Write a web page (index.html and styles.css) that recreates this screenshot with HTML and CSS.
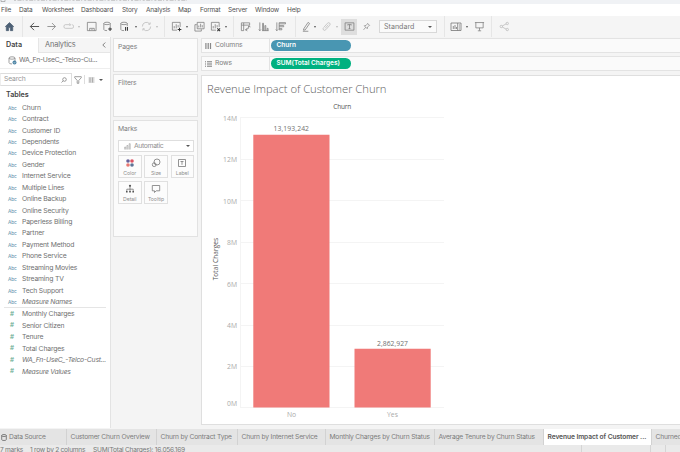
FILE: index.html
```html
<!DOCTYPE html>
<html lang="en">
<head>
<meta charset="utf-8">
<title>Revenue Impact of Customer Churn</title>
<link rel="stylesheet" href="styles.css">
</head>
<body>
<div class="app">
  <div class="titlebar"><svg width="200" height="4" viewBox="0 0 200 4"><path d="M1 0v1.500h4V0" fill="none" stroke="#999" stroke-width=".7"/><path d="M14 .4H187" stroke="#bbb" stroke-width=".8" stroke-dasharray="2 1.500 4 1.200 1 2"/></svg></div>
  <nav class="menu"><span>File</span><span>Data</span><span>Worksheet</span><span>Dashboard</span><span>Story</span><span>Analysis</span><span>Map</span><span>Format</span><span>Server</span><span>Window</span><span>Help</span></nav>
  <div class="toolbar">
    <svg class="ic" viewBox="0 0 12 12"><path d="M1.500 6 6 1.700 10.500 6H9.500V10.500H7V7.200H5V10.500H2.500V6Z" fill="#4d6075" stroke="#4d6075"/></svg>
    <i class="sep"></i>
    <svg class="ic dark" viewBox="0 0 12 12"><path d="M11 6H1.500M5.500 2 1.500 6l4 4"/></svg>
    <svg class="ic" viewBox="0 0 12 12"><path d="M1.500 6h8.700M6.500 2.200 10.300 6 6.500 9.800"/></svg>
    <svg class="ic pale" viewBox="0 0 12 12"><path d="M8 4H2.500Q1 4 1 6t1.500 2H10q1.500 0 1.500-2T10 4M7 2.500 8.500 4 7 5.500"/></svg>
    <i class="caret pale"></i>
    <svg class="ic" viewBox="0 0 12 12"><path d="M1.500 1.500h9.500v9h-9.500ZM4 10.500V8h5v2.500M6.500 8.500v1.500"/></svg>
    <svg class="ic" viewBox="0 0 12 12"><path d="M2 2.600v6.600Q2 10.500 5.500 10.500M9 2.600v4M2 2.600Q2 1.300 5.500 1.300T9 2.600 5.500 4 2 2.600"/><path class="strong" d="M6.800 8.800h4M8.800 6.800v4"/></svg>
    <svg class="ic" viewBox="0 0 12 12"><path d="M2 2.600v6.600Q2 10.500 5.500 10.500M9 2.600v3M2 2.600Q2 1.300 5.500 1.300T9 2.600 5.500 4 2 2.600"/><path class="strong" d="M7.200 6.500v4M9.200 6.500v4"/></svg>
    <i class="caret"></i>
    <svg class="ic pale" viewBox="0 0 12 12"><path d="M1.500 6A4.400 4.400 0 0 1 9.500 3.300M10.500 6A4.400 4.400 0 0 1 2.500 8.700M10 1.500v2H8M2 10.500v-2h2"/></svg>
    <i class="caret pale"></i>
    <i class="sep"></i>
    <svg class="ic" viewBox="0 0 12 12"><path d="M6.500 10H1.500V1.500h8.500v5M3.500 8V5.500M5.700 8V3.500M7.800 7V4.500"/><path class="strong" d="M7.300 9.300h4M9.300 7.300v4"/></svg>
    <i class="caret"></i>
    <svg class="ic" viewBox="0 0 12 12"><path d="M3.500 1.500h7.500v7H3.500ZM3 4H1v7h7V9M5.200 7V5M7.200 7V3M9 7V4.500"/></svg>
    <svg class="ic" viewBox="0 0 12 12"><path d="M6.500 10H1.500V1.500h8.500v5M3.500 8V5.500M5.700 8V3.500M7.800 7V4.500"/><path class="strong" d="m8 8 3 3M11 8l-3 3"/></svg>
    <i class="caret"></i>
    <i class="sep"></i>
    <svg class="ic" viewBox="0 0 12 12"><path d="M1.500 2h9v2.500h-9ZM1.500 4.500V10.500H4v-8.500M10 5.500Q10 9 6 9.500M8 8 6 9.600l2 1.200M8.700 6.800 10 5.200l1.300 1.600"/></svg>
    <svg class="ic" viewBox="0 0 12 12"><path d="M2 1.500v9M.8 9.300 2 10.600l1.200-1.300M5 10.500V2.500h1v8M7.500 10.500V5h1v5.500M10 10.500V8h1v2.500M4.500 10.500h7"/></svg>
    <svg class="ic" viewBox="0 0 12 12"><path d="M2 1.500v9M.8 9.300 2 10.600l1.200-1.300M4.500 1.800H11.500v1.300h-7M4.500 5H9.500v1.300h-5M4.500 8.300H7.500v1.300h-3M4.500 1.800v8"/></svg>
    <i class="sep"></i>
    <svg class="ic" viewBox="0 0 12 12"><path d="m3 8.500 4.700-7 1.700 1.200-4.800 7L2.700 10ZM2 11.200h6"/></svg>
    <i class="caret"></i>
    <svg class="ic pale" viewBox="0 0 12 12"><path d="m3 7 4-4.500Q8.500 1.200 9.500 2.300t0 2.400L5.300 9.500Q3.800 10.800 2.700 9.700t0-2.400M4.500 8l3.500-4"/></svg>
    <i class="caret pale"></i>
    <span class="toggled"><svg class="ic" viewBox="0 0 12 12"><path d="M1.200 2h9.600v8H1.200ZM4 4.700V4h4v.7M6 4v4.200M5 8.200h2"/></svg></span>
    <svg class="ic pin" viewBox="0 0 12 12"><path d="m7 1.500 3.500 3.500M7.500 2.200 5.500 4.500 3 5l4 4 .5-2.500 2.300-2M5 7 2 10.500"/></svg>
    <span class="select">Standard<i class="caret"></i></span>
    <i class="sep"></i>
    <svg class="ic wide" viewBox="0 0 12 12"><path d="M1 2h10v7.500H1ZM7.700 2v7.500M3.300 8V5M5 8V4M6.500 8V6M9 4h1M9 6h1M9 8h1"/></svg>
    <i class="caret"></i>
    <svg class="ic" viewBox="0 0 12 12"><path d="M1 1.700h10M2 1.700v5.800h8V1.700M6 7.500v3M4.200 10.700h3.600"/></svg>
    <i class="sep"></i>
    <svg class="ic pale" viewBox="0 0 12 12"><path d="M3.500 5.500 8 3M3.500 6.500 8 9"/><circle cx="2.500" cy="6" r="1.300"/><circle cx="9" cy="2.700" r="1.300"/><circle cx="9" cy="9.300" r="1.300"/></svg>
  </div>
  <main class="work">
    <aside class="data">
      <div class="tabs"><b>Data</b><span>Analytics<svg width="4" height="6" viewBox="0 0 4 6"><path d="M3.300.5.800 3l2.500 2.500" fill="none" stroke="#666" stroke-width=".8"/></svg></span></div>
      <div class="source"><svg width="9" height="9" viewBox="0 0 9 9" fill="none" stroke="#888" stroke-width=".8"><path d="M1 2v4.500Q1 8 4 8M7 2v3M1 2Q1 .8 4 .8T7 2 4 3.200 1 2"/><circle cx="6.500" cy="6.500" r="2" fill="#4a83a3" stroke="none"/><path d="m5.600 6.500.7.700 1.200-1.400" stroke="#fff" stroke-width=".5"/></svg><span>WA_Fn-UseC_-Telco-Cu...</span></div>
      <div class="searchrow">
        <div class="search">Search<svg width="6" height="6" viewBox="0 0 6 6" fill="none" stroke="#777" stroke-width=".7"><circle cx="3.500" cy="2.500" r="1.800"/><path d="M2.200 3.800.5 5.500"/></svg></div>
        <svg width="8" height="8" viewBox="0 0 8 8" fill="none" stroke="#888" stroke-width=".8"><path d="M.7.700h6.600v1L4.800 4.400v2.900H3.200V4.400L.7 1.700Z"/></svg>
        <i class="line"></i>
        <svg width="7" height="6" viewBox="0 0 7 6" fill="none" stroke="#999" stroke-width=".7"><path d="M.5 1h6M.5 3h6M.5 5h6M2 .5v5M4.500 .5v5"/></svg>
        <i class="caret"></i>
      </div>
      <h2>Tables</h2>
      <ul class="fields dims">
        <li>Churn</li><li>Contract</li><li>Customer ID</li><li>Dependents</li><li>Device Protection</li><li>Gender</li><li>Internet Service</li><li>Multiple Lines</li><li>Online Backup</li><li>Online Security</li><li>Paperless Billing</li><li>Partner</li><li>Payment Method</li><li>Phone Service</li><li>Streaming Movies</li><li>Streaming TV</li><li>Tech Support</li><li class="gen">Measure Names</li>
      </ul>
      <ul class="fields meas">
        <li>Monthly Charges</li><li>Senior Citizen</li><li>Tenure</li><li>Total Charges</li><li class="gen">WA_Fn-UseC_-Telco-Cust...</li><li class="gen">Measure Values</li>
      </ul>
    </aside>
    <section class="cards">
      <div class="card pages">Pages</div>
      <div class="card filters">Filters</div>
      <div class="card marks">Marks
        <div class="marktype"><svg width="7" height="7" viewBox="0 0 7 7" fill="none" stroke="#999" stroke-width=".6"><path d="M.7 6.500V4h1v2.500M2.900 6.500V2.500h1v4M5.200 6.500V.7h1v5.800"/></svg><span>Automatic</span><i class="caret"></i></div>
        <div class="buttons">
          <div><svg width="10" height="10" viewBox="0 0 10 10"><g stroke="none"><circle cx="3" cy="3" r="1.800" fill="#66609a"/><circle cx="7" cy="3" r="1.800" fill="#dc5262"/><circle cx="3" cy="7" r="1.800" fill="#e87872"/><circle cx="7" cy="7" r="1.800" fill="#5d7496"/></g></svg>Color</div>
          <div><svg width="10" height="10" viewBox="0 0 10 10"><circle cx="6" cy="4" r="3"/><circle cx="3.200" cy="6.700" r="1.900"/></svg>Size</div>
          <div><svg width="10" height="10" viewBox="0 0 10 10"><path d="M1.500 1.500h7v7h-7ZM3.500 3.500h3M5 3.500v3.300"/></svg>Label</div>
          <div><svg width="10" height="10" viewBox="0 0 10 10"><path d="M5 2.500V8M1.800 7V5.200h6.400V7"/><g fill="#555" stroke="none"><circle cx="5" cy="1.800" r="1.100"/><path d="M1 7h1.600v1.500H1ZM4.200 7h1.600v1.500H4.200ZM7.400 7H9v1.500H7.400Z"/></g></svg>Detail</div>
          <div><svg width="10" height="10" viewBox="0 0 10 10"><path d="M1.300 1.500h7.400v5.300H5.200L3.500 8.500V6.800H1.300Z"/></svg>Tooltip</div>
        </div>
      </div>
    </section>
    <section class="view">
      <div class="shelf"><div class="name"><svg width="7" height="6" viewBox="0 0 7 6"><path d="M.9 0v6M3.200 0v6M5.500 0v6" stroke="#888" stroke-width="1.200"/></svg>Columns</div><span class="pill blue">Churn</span></div>
      <div class="shelf"><div class="name"><svg width="7" height="6" viewBox="0 0 7 6"><path d="M2 .8h5M2 3h5M2 5.200h5M0 .8h1M0 3h1M0 5.200h1" stroke="#777" stroke-width="1"/></svg>Rows</div><span class="pill green">SUM(Total Charges)</span></div>
      <div class="sheet">
        <svg class="chart" width="478" height="348" viewBox="202 76 478 348">
          <text class="title" x="207" y="93.300" textLength="179.500">Revenue Impact of Customer Churn</text>
          <text class="head" x="333.300" y="109" textLength="18">Churn</text>
          <g class="grid"><path d="M240 117.500H444M240 159.500H444M240 200.500H444M240 242.500H444M240 283.500H444M240 325.500H444M240 366.500H444M240 407.500H444M240.500 117V408"/></g>
          <g class="tick" text-anchor="end"><text x="237" y="120.500">14M</text><text x="237" y="162">12M</text><text x="237" y="203.800">10M</text><text x="237" y="245.200">8M</text><text x="237" y="286.500">6M</text><text x="237" y="327.800">4M</text><text x="237" y="369.200">2M</text><text x="237" y="406">0M</text></g>
          <path class="bar" d="M253.300 134.700H329.500V407.500H253.300ZM354.500 348.700H430.700V407.500H354.500Z"/>
          <text class="value" x="273.500" y="131.300" textLength="35.500">13,193,242</text>
          <text class="value" x="377" y="345.500" textLength="31">2,862,927</text>
          <g class="tick" text-anchor="middle"><text x="291.500" y="416.700">No</text><text x="392.500" y="416.700">Yes</text></g>
          <text class="head" transform="translate(217.500 280.300) rotate(-90)" textLength="42.500">Total Charges</text>
        </svg>
      </div>
    </section>
  </main>
  <div class="sheets"><span class="src"><svg width="6" height="7" viewBox="0 0 6 7" fill="none" stroke="#666" stroke-width=".8"><path d="M.7 1.500v4Q.7 6.500 3 6.500t2.300-1v-4M.7 1.500Q.7.500 3 .5t2.300 1T3 2.500.7 1.500"/></svg>Data Source</span><span>Customer Churn Overview</span><span>Churn by Contract Type</span><span>Churn by Internet Service</span><span>Monthly Charges by Churn Status</span><span>Average Tenure by Churn Status</span><span class="active">Revenue Impact of Customer ...</span><span>Churned</span></div>
  <footer class="status"><span>7 marks</span><span>1 row by 2 columns</span><span>SUM(Total Charges): 16,056,169</span><i></i><i></i><i></i><i></i></footer>
</div>
</body>
</html>
```
FILE: styles.css
```css
* { box-sizing: border-box; }
body { margin: 0; overflow: hidden; background: #f4f4f4; font: 6.8px/1.2 Inter, "Open Sans", sans-serif; letter-spacing: -.16px; color: #707070; }
h2, ul { margin: 0; padding: 0; list-style: none; }
svg { display: block; flex: none; }
.app { width: 680px; height: 452px; display: flex; flex-direction: column; overflow: hidden; }
.titlebar { height: 4px; background: #f0f2f5; flex: none; }
.menu { height: 12px; flex: none; background: #fff; padding-left: 1px; display: grid; grid-template-columns: 18px 23px 39px 41px 24px 32px 22px 28px 27px 32px 20px; align-items: center; padding-top: 1px; font-size: 6.5px; color: #505050; white-space: nowrap; }
.toolbar { height: 21px; flex: none; background: #f5f5f5; display: grid; align-items: center; justify-items: center; grid-template-columns: 18px 8px 16px 18px 16px 6px 18px 15px 18px 6px 15px 6px 8px 16px 6px 18px 15px 6px 8px 17px 18px 17px 12px 10px 8px 14px 8px 16px 18px 66px 7px 16px 6px 18px 7px 18px; }
.ic { width: 11px; height: 11px; fill: none; stroke: #777; stroke-width: .8; }
.ic.wide { width: 12px; height: 12px; }
.ic.pin { width: 9px; height: 9px; }
.ic.dark { stroke: #444; stroke-width: 1; }
.ic.pale { stroke: #b8b8b8; }
.ic .strong { stroke: #333; stroke-width: 1.1; }
.sep { width: 1px; height: 21px; background: #e6e6e6; }
.caret { width: 0; height: 0; border: 1.500px solid transparent; border-top: 2px solid #555; border-bottom: 0; }
.caret.pale { border-top-color: #bbb; }
.toggled { width: 16px; height: 16px; background: #dedede; display: grid; place-items: center; }
.select { width: 58px; height: 13px; border: 1px solid #d8d8d8; background: #fafafa; display: flex; align-items: center; justify-content: space-between; padding: 1px 4px 0; font-size: 7.1px; letter-spacing: 0; color: #777; }
.select .caret, .marktype .caret, .searchrow .caret { border-width: 2px 2px 0; }
.work { height: 391px; flex: none; display: flex; }
.data { width: 111px; background: #fff; border-right: 1px solid #e3e3e3; flex: none; white-space: nowrap; }
.tabs { height: 15px; margin-top: 1px; display: grid; grid-template-columns: 38px 1fr; font-size: 7.4px; }
.tabs b { padding: 3px 0 0 6px; color: #444; font-size: 7.2px; letter-spacing: 0; font-weight: 600; }
.tabs span { background: #f5f5f5; border-left: 1px solid #e6e6e6; border-bottom: 1px solid #e6e6e6; display: flex; justify-content: space-between; align-items: center; padding: 0 4px 0 6px; }
.source { height: 16px; display: flex; align-items: center; gap: 2px; padding-left: 8px; border-bottom: 1px solid #eee; letter-spacing: -.24px; }
.searchrow { height: 20px; display: flex; align-items: center; padding-top: 1px; }
.searchrow > svg { margin-left: 2px; }
.search { width: 72px; height: 13px; border: 1px solid #ddd; border-left-color: #eee; display: flex; align-items: center; justify-content: space-between; padding: 0 4px 0 3px; color: #999; }
.line { width: 1px; height: 9px; background: #ddd; margin: 0 1px 0 2px; }
.searchrow .caret { margin-left: 4px; }
h2 { font-size: 7.2px; font-weight: 600; line-height: 11px; padding-left: 6px; color: #444; height: 12.600px; letter-spacing: -.05px; }
.fields { display: grid; grid-auto-rows: 11.430px; align-items: center; }
.fields li { display: grid; grid-template-columns: 14px 1fr; align-items: center; padding-left: 8px; line-height: 11px; }
.fields li::before { content: "Abc"; font-size: 4.800px; letter-spacing: -.1px; color: #5589a8; font-style: normal; padding-top: 1px; line-height: 10px; }
.meas { border-top: 1px solid #e5e5e5; margin: 0 4px; }
.meas li { padding-left: 4px; }
.meas li::before { content: "#"; font-size: 6.200px; font-weight: 700; color: #84bba6; padding: 0 0 0 2px; }
.gen { font-style: italic; letter-spacing: -.22px; }
.cards { width: 89px; padding: 1px 2px 0 2px; flex: none; }
.card { border: 1px solid #e2e2e2; background: #fbfbfb; padding: 4px 3px 3px 4px; color: #808080; }
.pages { height: 34px; }
.filters { height: 43px; margin: 2px 0 3px; }
.marks { height: 117px; }
.marktype { height: 12px; margin-top: 7px; border: 1px solid #dedede; display: grid; grid-template-columns: 10px 1fr 10px; align-items: center; padding-left: 5px; color: #909090; background: #fff; }
.marktype span { letter-spacing: -.35px; }
.marktype .caret { justify-self: center; }
.buttons { display: grid; grid-template-columns: repeat(3, 23.500px); justify-content: space-between; gap: 3px 0; margin-top: 3px; }
.buttons div { height: 23px; border: 1px solid #e0e0e0; display: flex; flex-direction: column; align-items: center; justify-content: space-between; padding: 2px 0 1px; font-size: 5.200px; letter-spacing: -.08px; line-height: 6px; color: #909090; background: #fcfcfc; }
.buttons svg { fill: none; stroke: #777; stroke-width: .8; }
.view { flex: 1; padding-left: 1px; min-width: 0; }
.shelf { height: 15px; margin-top: 1px; margin-bottom: 3px; border: 1px solid #e3e3e3; border-right: 0; background: #fafafa; display: flex; align-items: center; }
.name { width: 68px; height: 13px; display: flex; align-items: center; gap: 3px; padding-left: 3px; border-right: 1px solid #e3e3e3; color: #808080; letter-spacing: -.1px; }
.pill { width: 80px; height: 10.500px; border-radius: 5.300px; margin-left: 1px; padding-left: 5.500px; line-height: 10.500px; color: #fff; font-weight: 600; letter-spacing: 0; font-size: 6.500px; white-space: nowrap; }
.blue { background: #4996b2; }
.green { background: #00b180; }
.sheet { height: 350px; margin-top: 4px; border: 1px solid #dfdfdf; border-right: 0; background: #fff; }
.chart { font-family: "Open Sans", "Noto Sans", sans-serif; letter-spacing: 0; }
.title { font-size: 11.300px; font-weight: 300; fill: #606060; }
.head { font-size: 6.500px; fill: #555; }
.value { font-size: 6.800px; fill: #707070; }
.tick { font-size: 6.800px; fill: #aaa; }
.grid { fill: none; stroke: #f4f4f4; }
.bar { fill: #f07a78; }
.sheets { height: 16px; flex: none; margin-top: 1px; display: grid; grid-template-columns: 67px 90px 81px 88px 109px 109px 108px 40px; background: #e4e4e4; color: #7c7c7c; white-space: nowrap; letter-spacing: -.2px; font-size: 6.700px; }
.sheets span { border-right: 1px solid #d2d2d2; padding-left: 3.500px; line-height: 16px; overflow: hidden; }
.sheets .src { display: flex; align-items: center; gap: 2px; padding-left: 1px; }
.sheets .active { background: #fff; color: #555; font-weight: 600; letter-spacing: -.1px; }
.status { height: 7px; flex: none; background: #eaeaea; display: grid; grid-template-columns: 30px 63px 488px 69px 15px 15px 1px; font-size: 6.600px; letter-spacing: -.25px; line-height: 11px; white-space: nowrap; overflow: hidden; color: #777; }
.status i { border-left: 1px solid #d5d5d5; }
```
